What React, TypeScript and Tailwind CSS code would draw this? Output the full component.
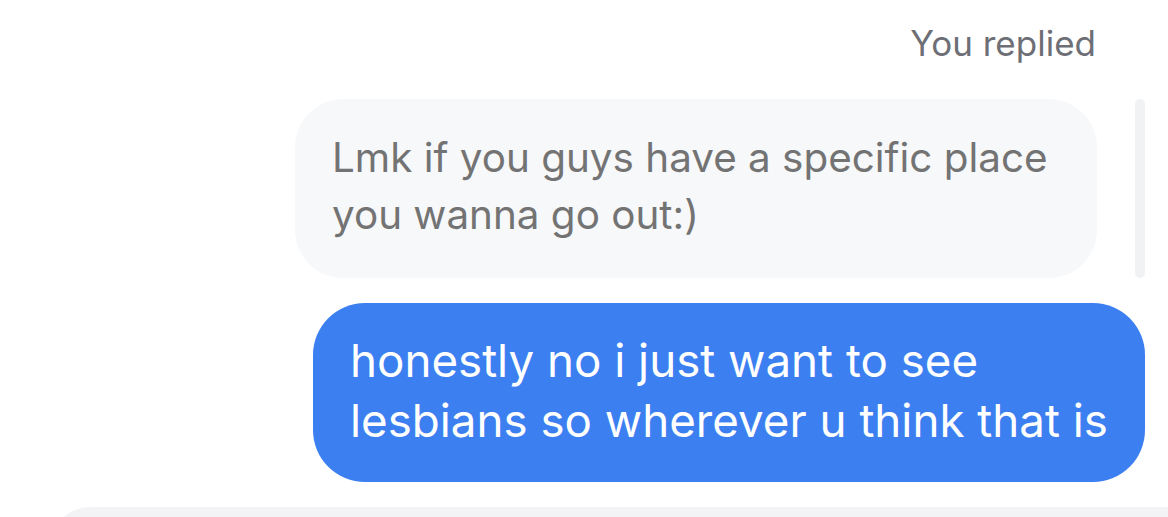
export default function App() {
  return (
    <div className="w-[1168px] h-[517px] bg-white overflow-hidden flex flex-col" style={{ fontFamily: 'Inter, "Noto Sans", sans-serif' }}>
      <div className="flex justify-end pr-[72px] pt-[21px] h-[99px] shrink-0">
        <div className="text-[35px] leading-[44px] text-[#6e6f76]">You replied</div>
      </div>
      <div className="flex justify-end items-start shrink-0">
        <div className="w-[802px] h-[179px] rounded-[48px] bg-[#f7f8fa] pl-[37px] pt-[30px] text-[40.4px] leading-[57px] text-[#737373] whitespace-nowrap">
          Lmk if you guys have a specific place<br />you wanna go out:)
        </div>
        <div className="ml-[38px] mr-[23px] w-[10px] h-[179px] rounded-full bg-[#f1f2f4]" />
      </div>
      <div className="flex justify-end pr-[23px] pt-[25px] shrink-0">
        <div className="w-[832px] h-[179px] rounded-[52px] bg-[#3c7ff1] pl-[37px] pt-[28px] text-[45.7px] leading-[60px] text-white whitespace-nowrap">
          honestly no i just want to see<br />lesbians so wherever u think that is
        </div>
      </div>
      <div className="pl-[50px] pt-[25px] shrink-0">
        <div className="h-[40px] rounded-tl-[40px] bg-[#f3f3f5]" />
      </div>
    </div>
  );
}
